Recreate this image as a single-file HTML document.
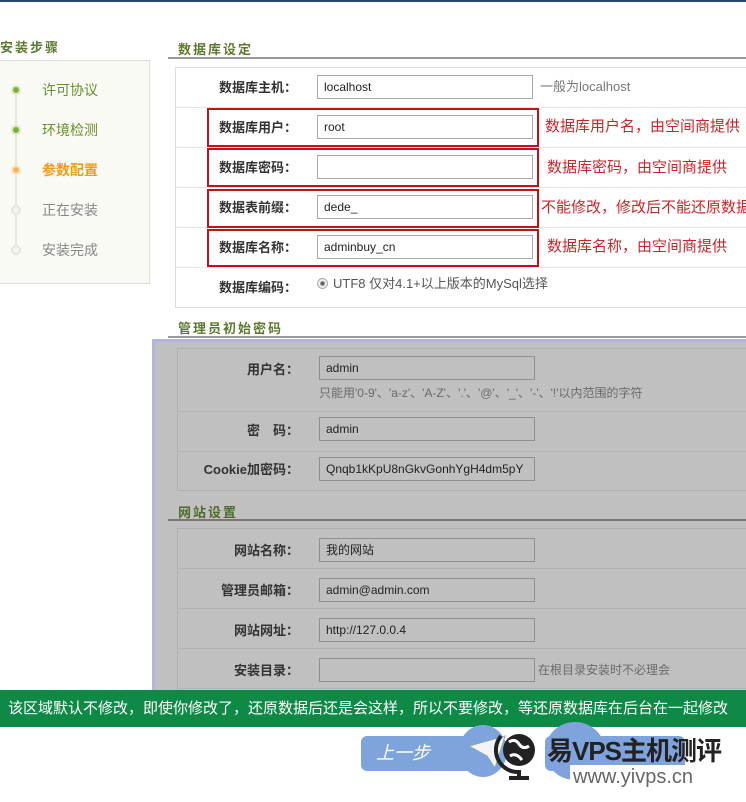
<!DOCTYPE html>
<html><head><meta charset="utf-8"><style>
*{margin:0;padding:0;box-sizing:border-box}
body{width:746px;height:802px;position:relative;overflow:hidden;background:#fff;font-family:"Liberation Sans","Noto Sans CJK SC",sans-serif;font-size:12px;color:#333;line-height:16px}
.a{position:absolute;white-space:nowrap}
.h{font-weight:bold;color:#5c7a2e;font-size:13px;letter-spacing:2px;line-height:16px}
.ul{position:absolute;height:2px;background:#9a9a9a}
.box{position:absolute;border:1px solid #ddd}
.row{position:absolute;left:0;right:0;border-bottom:1px solid #e6e6e6}
.lb{position:absolute;width:122px;text-align:right;font-weight:bold;font-size:13px;color:#333;line-height:16px}
.in{position:absolute;width:216px;height:24px;border:1px solid #aaa;background:#fff;font-size:12px;line-height:22px;padding-left:6px;color:#222}
.red{position:absolute;border:2px solid #c0121a}
.rt{position:absolute;color:#c8252a;font-size:15px;white-space:nowrap;line-height:18px}
.dot{position:absolute;left:11px;width:10px;height:10px;border-radius:50%}
.st{position:absolute;left:42px;font-size:14px;line-height:18px}
.g .in{background:#c0c0c0;border-color:#8f8f8f}
</style></head><body>
<div class="a" style="left:0;top:0;width:746px;height:2px;background:#2a4a6a"></div>

<div class="a h" style="left:0;top:40px">安装步骤</div>
<div class="box" style="left:-2px;top:60px;width:152px;height:224px;background:#f8faf3"></div>
<div class="a" style="left:15px;top:90px;width:2px;height:160px;background:#e3e8dc"></div>
<div class="dot" style="top:85px;background:#7fb03a;border:2px solid #dbe9c8"></div>
<div class="dot" style="top:125px;background:#7fb03a;border:2px solid #dbe9c8"></div>
<div class="dot" style="top:165px;background:#f5b860;border:2px solid #fbe4c2"></div>
<div class="dot" style="top:205px;background:#f4f6f0;border:2px solid #e3e8dc"></div>
<div class="dot" style="top:245px;background:#f4f6f0;border:2px solid #e3e8dc"></div>
<div class="st" style="top:81px;color:#6b8e2a">许可协议</div>
<div class="st" style="top:121px;color:#6b8e2a">环境检测</div>
<div class="st" style="top:161px;color:#f29a16;font-weight:bold">参数配置</div>
<div class="st" style="top:201px;color:#888">正在安装</div>
<div class="st" style="top:241px;color:#888">安装完成</div>

<div class="a h" style="left:178px;top:42px">数据库设定</div>
<div class="ul" style="left:168px;top:57px;width:578px"></div>
<div class="box" style="left:175px;top:67px;width:575px;height:241px">
 <div class="row" style="top:0;height:40px"></div><div class="row" style="top:40px;height:40px"></div><div class="row" style="top:80px;height:40px"></div><div class="row" style="top:120px;height:40px"></div><div class="row" style="top:160px;height:40px"></div>
</div>
<div class="lb" style="left:175px;top:80px">数据库主机：</div><div class="in" style="left:317px;top:75px">localhost</div><div class="a" style="left:540px;top:79px;color:#777;font-size:13px">一般为localhost</div>
<div class="lb" style="left:175px;top:120px">数据库用户：</div><div class="in" style="left:317px;top:115px">root</div>
<div class="lb" style="left:175px;top:160px">数据库密码：</div><div class="in" style="left:317px;top:155px"></div>
<div class="lb" style="left:175px;top:200px">数据表前缀：</div><div class="in" style="left:317px;top:195px">dede_</div>
<div class="lb" style="left:175px;top:240px">数据库名称：</div><div class="in" style="left:317px;top:235px">adminbuy_cn</div>
<div class="lb" style="left:175px;top:280px">数据库编码：</div>
<div class="a" style="left:317px;top:278px;width:11px;height:11px;border-radius:50%;border:1px solid #aaa;background:radial-gradient(#666 30%,#eee 40%)"></div>
<div class="a" style="left:333px;top:276px;color:#555;font-size:13px">UTF8 仅对4.1+以上版本的MySql选择</div>
<div class="red" style="left:207px;top:108px;width:332px;height:39px"></div>
<div class="red" style="left:207px;top:148px;width:332px;height:39px"></div>
<div class="red" style="left:207px;top:189px;width:332px;height:39px"></div>
<div class="red" style="left:207px;top:229px;width:332px;height:38px"></div>
<div class="rt" style="left:545px;top:118px">数据库用户名，由空间商提供</div>
<div class="rt" style="left:547px;top:159px">数据库密码，由空间商提供</div>
<div class="rt" style="left:541px;top:199px">不能修改，修改后不能还原数据</div>
<div class="rt" style="left:547px;top:238px">数据库名称，由空间商提供</div>

<div class="a h" style="left:178px;top:321px">管理员初始密码</div>
<div class="ul" style="left:168px;top:336px;width:578px"></div>

<div class="g a" style="left:152px;top:339px;width:594px;height:351px;background:#c0c0c0;border-left:3px solid #b3b3e0;border-top:3px solid #b3b3e0">
 <div class="box" style="left:22px;top:6px;width:580px;height:143px;border-color:#b0b0b0">
  <div class="row" style="top:0;height:63px;border-color:#b4b4b4"></div><div class="row" style="top:63px;height:40px;border-color:#b4b4b4"></div>
 </div>
 <div class="lb" style="left:22px;top:20px">用户名：</div><div class="in" style="left:164px;top:14px">admin</div>
 <div class="a" style="left:164px;top:43px;color:#6a6a6a;font-size:12px">只能用'0-9'、'a-z'、'A-Z'、'.'、'@'、'_'、'-'、'!'以内范围的字符</div>
 <div class="lb" style="left:22px;top:81px">密　码：</div><div class="in" style="left:164px;top:75px">admin</div>
 <div class="lb" style="left:22px;top:120px">Cookie加密码：</div><div class="in" style="left:164px;top:115px">Qnqb1kKpU8nGkvGonhYgH4dm5pY</div>
 <div class="a h" style="left:23px;top:163px;color:#4f6a2a">网站设置</div>
 <div class="ul" style="left:13px;top:177px;width:581px;background:#777"></div>
 <div class="box" style="left:22px;top:186px;width:580px;height:170px;border-color:#b0b0b0">
  <div class="row" style="top:0;height:40px;border-color:#b4b4b4"></div><div class="row" style="top:40px;height:40px;border-color:#b4b4b4"></div><div class="row" style="top:80px;height:40px;border-color:#b4b4b4"></div><div class="row" style="top:120px;height:40px;border-color:#b4b4b4"></div>
 </div>
 <div class="lb" style="left:22px;top:201px">网站名称：</div><div class="in" style="left:164px;top:196px">我的网站</div>
 <div class="lb" style="left:22px;top:241px">管理员邮箱：</div><div class="in" style="left:164px;top:236px">admin@admin.com</div>
 <div class="lb" style="left:22px;top:281px">网站网址：</div><div class="in" style="left:164px;top:276px">http://127.0.0.4</div>
 <div class="lb" style="left:22px;top:321px">安装目录：</div><div class="in" style="left:164px;top:316px"></div>
 <div class="a" style="left:383px;top:320px;color:#6a6a6a;font-size:12px">在根目录安装时不必理会</div>
</div>

<div class="a" style="left:0;top:690px;width:746px;height:37px;background:#0f8a46;color:#fff;font-size:15px;line-height:37px;padding-left:8px">该区域默认不修改，即使你修改了，还原数据后还是会这样，所以不要修改，等还原数据库在后台在一起修改</div>

<div class="a" style="left:459px;top:725px;width:48px;height:52px;border-radius:50%;background:#7ea3dd"></div>
<div class="a" style="left:545px;top:722px;width:60px;height:58px;border-radius:50%;background:#7ea3dd"></div>
<div class="a" style="left:361px;top:736px;width:112px;height:35px;border-radius:6px;background:#7ea3dd;color:#fff;font-style:italic;font-size:18px;line-height:35px;padding-left:15px">上一步</div>
<div class="a" style="left:545px;top:736px;width:140px;height:35px;border-radius:6px;background:#7ea3dd"></div>
<svg class="a" style="left:465px;top:728px" width="50" height="48"><path d="M4 18 L40 8 L30 40 L22 28 Z" fill="#f2f4fa" stroke="#8aa"/></svg>
<svg class="a" style="left:494px;top:726px" width="50" height="60"><circle cx="25" cy="24" r="16" fill="#222"/><path d="M15 16 q6 -4 10 2 q4 6 10 2 M16 30 q6 -4 12 4" stroke="#fff" stroke-width="3" fill="none"/><path d="M7 10 A22 22 0 0 0 25 46" stroke="#222" stroke-width="4" fill="none"/><rect x="23" y="44" width="4" height="6" fill="#222"/><rect x="15" y="50" width="20" height="4" fill="#222"/></svg>
<div class="a" style="left:547px;top:736px;font-size:26px;line-height:30px;font-weight:bold;color:#222;letter-spacing:-1px">易VPS主机测评</div>
<div class="a" style="left:570px;top:765px;font-size:20px;line-height:24px;color:#666;background:#fff;padding:0 3px">www.yivps.cn</div>
</body></html>
